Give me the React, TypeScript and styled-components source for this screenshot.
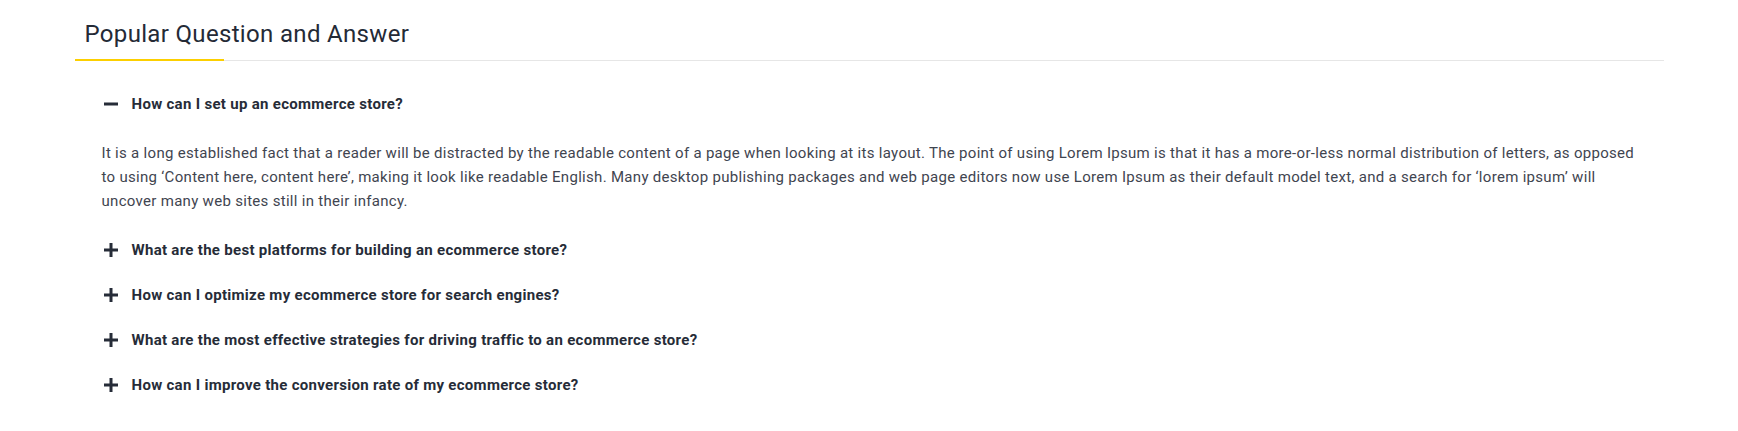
import React, { useState } from "react";
import styled, { createGlobalStyle } from "styled-components";

const GlobalStyle = createGlobalStyle`
  html, body { margin: 0; padding: 0; background: #ffffff; }
  body { font-family: Roboto, "Liberation Sans", Arial, sans-serif; }
  * { box-sizing: border-box; }
`;

const Section = styled.section`
  width: 1589px;
  margin: 0 auto;
  padding-bottom: 24px;
`;

const TitleBar = styled.div`
  position: relative;
  border-bottom: 1px solid #e6e6e6;
  padding: 20px 0 12px 10px;
  &::after {
    content: "";
    position: absolute;
    left: 0;
    bottom: -1px;
    width: 149px;
    height: 2px;
    background: #fccf00;
  }
`;

const Title = styled.h2`
  margin: 0;
  font-size: 24px;
  line-height: 28px;
  font-weight: 400;
  letter-spacing: 0.33px;
  color: #242a36;
`;

const List = styled.div`
  margin-top: 20px;
  padding: 0 18px 0 27px;
  display: flex;
  flex-direction: column;
  align-items: stretch;
`;

const Question = styled.button`
  display: flex;
  align-items: center;
  align-self: flex-start;
  gap: 12px;
  height: 45px;
  padding: 0;
  border: 0;
  background: none;
  cursor: pointer;
  text-align: left;
  font-family: inherit;
  font-size: 15px;
  letter-spacing: 0.3px;
  font-weight: 700;
  color: #262c38;
`;

const IconBox = styled.span`
  width: 18px;
  height: 18px;
  display: flex;
  align-items: center;
  justify-content: center;
`;

const Answer = styled.p`
  margin: 0;
  padding: 15px 0 14px;
  font-size: 15px;
  letter-spacing: 0.3px;
  line-height: 24px;
  color: #3f4550;
`;

const items = [
  {
    q: "How can I set up an ecommerce store?",
    a: "It is a long established fact that a reader will be distracted by the readable content of a page when looking at its layout. The point of using Lorem Ipsum is that it has a more-or-less normal distribution of letters, as opposed to using \u2018Content here, content here\u2019, making it look like readable English. Many desktop publishing packages and web page editors now use Lorem Ipsum as their default model text, and a search for \u2018lorem ipsum\u2019 will uncover many web sites still in their infancy.",
  },
  { q: "What are the best platforms for building an ecommerce store?", a: "" },
  { q: "How can I optimize my ecommerce store for search engines?", a: "" },
  { q: "What are the most effective strategies for driving traffic to an ecommerce store?", a: "" },
  { q: "How can I improve the conversion rate of my ecommerce store?", a: "" },
];

const ToggleIcon = ({ open }: { open: boolean }) => (
  <svg width="14" height="14" viewBox="0 0 14 14">
    <rect x="0" y="5.5" width="14" height="3" fill="#262c38" />
    {!open && <rect x="5.5" y="0" width="3" height="14" fill="#262c38" />}
  </svg>
);

export default function App() {
  const [open, setOpen] = useState(0);
  return (
    <>
      <GlobalStyle />
      <Section>
        <TitleBar>
          <Title>Popular Question and Answer</Title>
        </TitleBar>
        <List>
          {items.map((it, i) => (
            <React.Fragment key={i}>
              <Question onClick={() => setOpen(open === i ? -1 : i)}>
                <IconBox>
                  <ToggleIcon open={open === i} />
                </IconBox>
                {it.q}
              </Question>
              {open === i && it.a && <Answer>{it.a}</Answer>}
            </React.Fragment>
          ))}
        </List>
      </Section>
    </>
  );
}
